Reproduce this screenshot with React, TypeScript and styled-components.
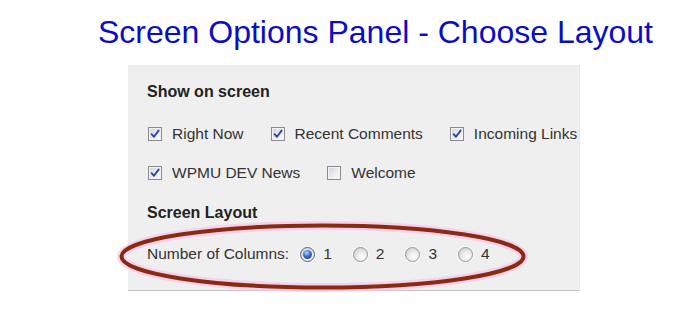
import React, { useState } from 'react';
import styled, { createGlobalStyle } from 'styled-components';

const GlobalStyle = createGlobalStyle`
  body {
    margin: 0;
    background: #ffffff;
    font-family: "Liberation Sans", Arial, sans-serif;
  }
`;

const Page = styled.div`
  position: relative;
  width: 695px;
  height: 322px;
  overflow: hidden;
`;

const Title = styled.h1`
  margin: 14px 0 0 98px;
  font-size: 32px;
  line-height: 36px;
  font-weight: normal;
  color: #0c0cc2;
  white-space: nowrap;
`;

const Panel = styled.div`
  box-sizing: border-box;
  width: 452px;
  margin: 15px 0 0 128px;
  padding: 17px 0 26px 19px;
  background: #efefef;
  border-bottom: 1px solid #c6c6c6;
  border-right: 1px solid #e6e6e6;
`;

const Heading = styled.h2<{ top?: number }>`
  margin: ${p => p.top ?? 0}px 0 0;
  font-size: 16px;
  line-height: 20px;
  font-weight: bold;
  color: #222;
`;

const OptionRow = styled.div<{ top: number }>`
  display: flex;
  align-items: center;
  gap: 26px;
  height: 20px;
  margin-top: ${p => p.top}px;
  font-size: 15.5px;
  color: #333;
  white-space: nowrap;
`;

const Option = styled.label`
  display: inline-flex;
  align-items: center;
  gap: 10px;
  cursor: pointer;
`;

const Box = styled.span`
  box-sizing: border-box;
  width: 14px;
  height: 14px;
  margin-left: 1px;
  border: 1px solid #8a8b8c;
  background: linear-gradient(135deg, #d3d5dc 0%, #eef0f4 65%, #ffffff 100%);
  box-shadow: inset 0 0 0 1px #f4f4f4;
  display: inline-flex;
  align-items: center;
  justify-content: center;
`;

const ColumnsRow = styled.div`
  display: flex;
  align-items: center;
  height: 20px;
  margin-top: 21px;
  font-size: 15.5px;
  color: #333;
  white-space: nowrap;
`;

const ColumnsLabel = styled.span`
  margin-right: 11px;
`;

const RadioOption = styled.label`
  display: inline-flex;
  align-items: center;
  gap: 8px;
  margin-right: 21px;
  cursor: pointer;
`;

const Radio = styled.span<{ checked: boolean }>`
  box-sizing: border-box;
  width: 15px;
  height: 15px;
  border-radius: 50%;
  border: 1px solid ${p => (p.checked ? '#4d6488' : '#979797')};
  background: radial-gradient(circle at 62% 68%, #ffffff 0%, #ececec 40%, #c4c4c4 100%);
  box-shadow: 0 0 0 1px rgba(255, 255, 255, 0.6);
  display: inline-flex;
  align-items: center;
  justify-content: center;
`;

const Dot = styled.span`
  width: 9px;
  height: 9px;
  border-radius: 50%;
  background: radial-gradient(circle at 40% 30%, #b7d2ff 0%, #3a6fd0 45%, #0f2f7a 100%);
`;

const Marker = styled.svg`
  position: absolute;
  left: 114px;
  top: 218px;
  pointer-events: none;
`;

const Check = () => (
  <svg width="10" height="10" viewBox="0 0 10 10">
    <path d="M1.6 5.2 L4 7.8 L8.6 1.6" fill="none" stroke="#2a4a9e" strokeWidth="1.9" strokeLinecap="round" strokeLinejoin="round" />
  </svg>
);

const firstRow = [
  { name: 'Right Now', on: true },
  { name: 'Recent Comments', on: true },
  { name: 'Incoming Links', on: true },
];

const secondRow = [
  { name: 'WPMU DEV News', on: true },
  { name: 'Welcome', on: false },
];

export default function App() {
  const [columns, setColumns] = useState(1);

  return (
    <>
      <GlobalStyle />
      <Page>
        <Title>Screen Options Panel - Choose Layout</Title>
        <Panel>
          <Heading>Show on screen</Heading>
          <OptionRow top={22}>
            {firstRow.map(o => (
              <Option key={o.name}>
                <Box>{o.on && <Check />}</Box>
                {o.name}
              </Option>
            ))}
          </OptionRow>
          <OptionRow top={19}>
            {secondRow.map(o => (
              <Option key={o.name}>
                <Box>{o.on && <Check />}</Box>
                {o.name}
              </Option>
            ))}
          </OptionRow>
          <Heading top={20}>Screen Layout</Heading>
          <ColumnsRow>
            <ColumnsLabel>Number of Columns:</ColumnsLabel>
            {[1, 2, 3, 4].map(n => (
              <RadioOption key={n} onClick={() => setColumns(n)}>
                <Radio checked={columns === n}>{columns === n && <Dot />}</Radio>
                {n}
              </RadioOption>
            ))}
          </ColumnsRow>
        </Panel>

        {/* highlight ring round the layout row */}
        <Marker width="418" height="78" viewBox="0 0 418 78">
          <ellipse cx="208.5" cy="38.5" rx="201" ry="31" fill="none" stroke="#f6c4ec" strokeOpacity="0.7" strokeWidth="9" />
          <ellipse cx="208.5" cy="38.5" rx="201" ry="31" fill="none" stroke="#8a2a10" strokeWidth="4" />
        </Marker>
      </Page>
    </>
  );
}
